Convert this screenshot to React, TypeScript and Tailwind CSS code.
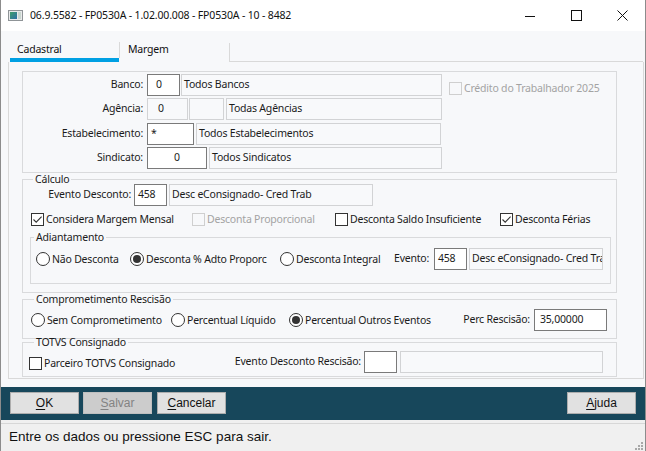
import React from 'react';

const textBase = "font-['Noto_Sans',sans-serif] text-[10.5px] tracking-[-0.2px] text-[#1b1b1b]";

interface CheckProps {
  label: string;
  checked?: boolean;
  disabled?: boolean;
  className?: string;
}

const Check = ({ label, checked, disabled, className = '' }: CheckProps) => (
  <div className={`flex h-[16px] items-center whitespace-nowrap ${className}`}>
    <span
      className={`flex h-[13px] w-[13px] shrink-0 items-center justify-center border ${
        disabled ? 'border-[#cfcfcf] bg-[#f7f8fa]' : 'border-[#333333] bg-white'
      }`}
    >
      {checked && (
        <svg width="11" height="11" viewBox="0 0 11 11">
          <path d="M1.5 5.5 L4.2 8.2 L9.6 2.6" fill="none" stroke="#333333" strokeWidth="1.1" />
        </svg>
      )}
    </span>
    <span className={`ml-[2px] leading-[16px] ${disabled ? 'text-[#a3a3a3]' : ''}`}>{label}</span>
  </div>
);

const Radio = ({ label, selected, className = '' }: { label: string; selected?: boolean; className?: string }) => (
  <div className={`flex h-[16px] items-center whitespace-nowrap ${className}`}>
    <span className="flex h-[14px] w-[14px] shrink-0 items-center justify-center rounded-full border border-[#333333] bg-white">
      {selected && <span className="h-[8px] w-[8px] rounded-full bg-[#333333]" />}
    </span>
    <span className="ml-[2px] leading-[16px]">{label}</span>
  </div>
);

// editable field: white with dark border
const Field = ({ value = '', className = '' }: { value?: string; className?: string }) => (
  <div
    className={`flex h-[22px] shrink-0 items-center overflow-hidden whitespace-nowrap border border-[#7a7a7a] bg-white ${className}`}
  >
    {value}
  </div>
);

// read only description box
const Ro = ({ value = '', className = '' }: { value?: string; className?: string }) => (
  <div
    className={`flex h-[22px] shrink-0 items-center overflow-hidden whitespace-nowrap border border-[#d2d3d5] bg-[#f8f9fb] ${className}`}
  >
    {value}
  </div>
);

const Label = ({ children, className = '' }: { children: React.ReactNode; className?: string }) => (
  <div className={`shrink-0 whitespace-nowrap ${className}`}>{children}</div>
);

const Btn = ({ hot, rest, disabled, className = '' }: { hot: string; rest: string; disabled?: boolean; className?: string }) => (
  <div
    className={`flex h-[22px] w-[69px] items-center justify-center border font-['Liberation_Sans',sans-serif] text-[12px] ${
      disabled
        ? 'border-[#bfbfbf] bg-[#cccccc] text-[#838383]'
        : 'border-[#adadad] bg-[#e1e1e1] text-[#111111]'
    } ${className}`}
  >
    <span className="underline underline-offset-2">{hot}</span>
    {rest}
  </div>
);

const TitleBar = () => (
  <div className="flex h-[31px] items-center bg-white">
    <svg className="ml-[7px]" width="15" height="11" viewBox="0 0 15 11">
      <rect x="0.5" y="0.5" width="14" height="10" fill="#e9eaeb" stroke="#8f9497" />
      <defs>
        <linearGradient id="ico" x1="0" y1="0" x2="1" y2="1">
          <stop offset="0" stopColor="#3f9e6b" />
          <stop offset="1" stopColor="#2f6fa8" />
        </linearGradient>
      </defs>
      <rect x="2" y="2" width="7" height="7" fill="url(#ico)" />
      <rect x="10" y="2" width="3" height="7" fill="#c9d6cf" />
    </svg>
    <span className="ml-[7px] font-['Noto_Sans',sans-serif] text-[10.5px] tracking-[-0.15px] text-[#111111]">
      06.9.5582 - FP0530A - 1.02.00.008 - FP0530A - 10 - 8482
    </span>
    <div className="ml-auto flex h-full">
      <div className="flex w-[46px] items-center justify-center">
        <svg width="10" height="10" viewBox="0 0 10 10">
          <path d="M0 5.5 H10" stroke="#111" strokeWidth="1" />
        </svg>
      </div>
      <div className="flex w-[46px] items-center justify-center">
        <svg width="11" height="11" viewBox="0 0 11 11">
          <rect x="0.5" y="0.5" width="10" height="10" fill="none" stroke="#111" strokeWidth="1" />
        </svg>
      </div>
      <div className="flex w-[46px] items-center justify-center">
        <svg width="11" height="11" viewBox="0 0 11 11">
          <path d="M0.5 0.5 L10.5 10.5 M10.5 0.5 L0.5 10.5" stroke="#111" strokeWidth="1" />
        </svg>
      </div>
    </div>
  </div>
);

const Tabs = () => (
  <div className={`flex h-[31px] pl-[9px] pr-[2px] ${textBase}`}>
    <div className="flex w-[109px] flex-col">
      <span className="pl-[7px] pt-[10px] leading-[16px] text-[#111111]">Cadastral</span>
      <span className="mt-auto h-[4px] bg-[#00a0e3]" />
    </div>
    <div className="mt-[11px] h-[16px] w-px bg-[#d9d9d9]" />
    <div className="flex w-[109px] flex-col">
      <span className="pl-[8px] pt-[10px] leading-[16px] text-[#111111]">Margem</span>
    </div>
    <div className="mt-[12px] h-[19px] w-px bg-[#d9d9d9]" />
    <div className="flex-1 border-b border-[#d9d9d9]" />
  </div>
);

export default function App() {
  return (
    <div className="flex h-[451px] w-[646px] flex-col overflow-hidden border-x border-[#8c8c8c] bg-[#f7f8fa]">
      <TitleBar />
      <Tabs />

      <div className={`ml-[7px] mr-[1px] flex h-[317px] flex-col border-x border-b border-[#d9d9d9] pl-[13px] pt-[9px] ${textBase}`}>
        {/* cadastro */}
        <fieldset className="h-[102px] w-[595px] border border-[#d9dadc] pt-[2px]">
          <div className="flex">
            <div className="flex w-[419px] flex-col">
              <div className="flex h-[22px] items-center">
                <Label className="w-[124px] pr-[4px] text-right">Banco:</Label>
                <Field value="0" className="w-[33px] pl-[8px]" />
                <Ro value="Todos Bancos" className="ml-[1px] w-[261px] pl-[2px]" />
              </div>
              <div className="mt-[2px] flex h-[22px] items-center">
                <Label className="w-[124px] pr-[4px] text-right">Agência:</Label>
                <Ro value="0" className="w-[41px] pl-[10px]" />
                <Ro className="ml-[1px] w-[35px]" />
                <Ro value="Todas Agências" className="ml-[2px] w-[216px] pl-[2px]" />
              </div>
              <div className="mt-[3px] flex h-[22px] items-center">
                <Label className="w-[124px] pr-[4px] text-right">Estabelecimento:</Label>
                <Field value="*" className="w-[47px] pl-[3px]" />
                <Ro value="Todos Estabelecimentos" className="ml-[2px] w-[245px] pl-[2px]" />
              </div>
              <div className="mt-[2px] flex h-[22px] items-center">
                <Label className="w-[124px] pr-[4px] text-right">Sindicato:</Label>
                <Field value="0" className="w-[60px] justify-center" />
                <Ro value="Todos Sindicatos" className="ml-[2px] w-[233px] pl-[2px]" />
              </div>
            </div>
            <Check label="Crédito do Trabalhador 2025" disabled className="ml-[7px] mt-[6px]" />
          </div>
        </fieldset>

        {/* calculo */}
        <fieldset className="h-[120px] w-[595px] border border-[#d9dadc]">
          <legend className="ml-[10px] px-[2px] leading-[13px]">Cálculo</legend>
          <div className="-mt-[2px] flex h-[22px] items-center">
            <Label className="w-[108px] text-right">Evento Desconto:</Label>
            <Field value="458" className="ml-[3px] w-[33px] pl-[3px]" />
            <Ro value="Desc eConsignado- Cred Trab" className="ml-[2px] h-[21px] w-[204px] pl-[2px]" />
          </div>
          <div className="mt-[5px] flex pl-[8px]">
            <Check label="Considera Margem Mensal" checked className="w-[161px]" />
            <Check label="Desconta Proporcional" disabled className="w-[143px]" />
            <Check label="Desconta Saldo Insuficiente" className="w-[165px]" />
            <Check label="Desconta Férias" checked />
          </div>
          <fieldset className="ml-[7px] mt-[4px] h-[53px] w-[581px] border border-[#d9dadc]">
            <legend className="ml-[3px] px-[2px] leading-[13px]">Adiantamento</legend>
            <div className="mt-[4px] flex h-[22px] items-center pl-[5px]">
              <Radio label="Não Desconta" className="w-[94px]" />
              <Radio label="Desconta % Adto Proporc" selected className="w-[150px]" />
              <Radio label="Desconta Integral" className="w-[114px]" />
              <Label className="w-[36px]">Evento:</Label>
              <Field value="458" className="ml-[4px] w-[33px] pl-[3px]" />
              <Ro value="Desc eConsignado- Cred Trab" className="ml-[2px] w-[134px] pl-[2px]" />
            </div>
          </fieldset>
        </fieldset>

        {/* comprometimento */}
        <fieldset className="h-[46px] w-[595px] border border-[#d9dadc]">
          <legend className="ml-[11px] px-[2px] leading-[13px]">Comprometimento Rescisão</legend>
          <div className="mt-[3px] flex h-[21px] items-center pl-[8px] pr-[9px]">
            <Radio label="Sem Comprometimento" className="w-[140px]" />
            <Radio label="Percentual Líquido" className="w-[118px]" />
            <Radio label="Percentual Outros Eventos" selected />
            <Label className="ml-auto">Perc Rescisão:</Label>
            <Field value="35,00000" className="ml-[4px] h-[21px] w-[73px] pl-[5px]" />
          </div>
        </fieldset>

        {/* totvs consignado */}
        <fieldset className="-mt-[3px] h-[41px] w-[595px] border border-[#d9dadc]">
          <legend className="ml-[11px] px-[2px] leading-[13px]">TOTVS Consignado</legend>
          <div className="mt-[2px] flex h-[21px] items-center pl-[6px]">
            <Check label="Parceiro TOTVS Consignado" className="mt-[3px] w-[201px]" />
            <Label className="w-[131px] text-right">Evento Desconto Rescisão:</Label>
            <Field className="ml-[3px] h-[21px] w-[33px]" />
            <Ro className="ml-[3px] h-[21px] w-[203px]" />
          </div>
        </fieldset>
      </div>

      <div className="h-[8px]" />

      <div className="flex h-[33px] items-start bg-[#17475b] pl-[9px] pr-[9px] pt-[5px]">
        <Btn hot="O" rest="K" className="w-[68px]" />
        <Btn hot="S" rest="alvar" disabled className="ml-[4px]" />
        <Btn hot="C" rest="ancelar" className="ml-[5px]" />
        <Btn hot="A" rest="juda" className="ml-auto" />
      </div>

      <div className="h-[3px] bg-[#f0f0f0]" />
      <div className="flex flex-1 items-center border-t border-[#d7d7d7] bg-[#f0f0f0] pl-[8px]">
        <span className="font-['Liberation_Sans',sans-serif] text-[13.5px] text-[#111111]">
          Entre os dados ou pressione ESC para sair.
        </span>
        <svg className="mb-[1px] ml-auto mr-[2px] self-end" width="10" height="10" viewBox="0 0 10 10">
          <g fill="#a8a8a8">
            <rect x="8" y="2" width="2" height="2" />
            <rect x="5" y="5" width="2" height="2" />
            <rect x="8" y="5" width="2" height="2" />
            <rect x="2" y="8" width="2" height="2" />
            <rect x="5" y="8" width="2" height="2" />
            <rect x="8" y="8" width="2" height="2" />
          </g>
        </svg>
      </div>
    </div>
  );
}
